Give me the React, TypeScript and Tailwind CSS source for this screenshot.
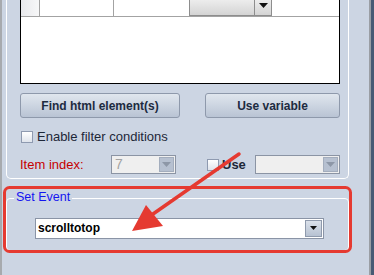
import React from 'react';

const Arrow = ({ light = false }: { light?: boolean }) => (
  <svg width="9" height="5" viewBox="0 0 9 5">
    <path d="M0 0h9L4.5 5z" fill={light ? '#8d97a7' : '#111'} />
  </svg>
);

const Checkbox = () => (
  <div className="w-[12px] h-[12px] border border-[#8e9ab0] bg-gradient-to-b from-white to-[#dfe4ec] shrink-0" />
);

const DisabledCombo = ({ value, width }: { value?: string; width: string }) => (
  <div className={`${width} h-[19px] shrink-0 flex border border-[#8b94a4] bg-[#efefef]`}>
    <div className="flex-1 pl-[3px] text-[14px] leading-[17px] text-[#a2a2a2]">{value}</div>
    <div className="w-[15px] my-[1px] mr-[1px] flex items-center justify-center bg-[#b6c0d0] border border-[#a3adbd]">
      <Arrow light />
    </div>
  </div>
);

const App = () => {
  return (
    <div className="relative w-[374px] h-[275px] overflow-hidden flex bg-[#ccd5e3] font-['Liberation_Sans',Arial,sans-serif]">
      <div className="w-[2px] shrink-0 bg-[#a7aaae]" />

      <div className="flex-1 flex flex-col pl-[4px]">
        {/* upper group (top cut off) */}
        <div className="w-[343px] -mt-[6px] border-x border-b border-white rounded-b-[5px] pl-[13px] pr-[8px] pb-[3px]">
          <div className="w-[320px] h-[90px] bg-white border-x border-b border-black">
            <div className="h-[23px] flex border-b border-[#a3a3a3]">
              <div className="w-[19px] bg-gradient-to-r from-[#e8e9ec] to-[#f7f7f8] border-r border-[#a3a3a3]" />
              <div className="w-[74px] border-r border-[#a3a3a3]" />
              <div className="w-[75px]" />
              <div className="w-[83px] flex border border-[#8d8d8d] bg-gradient-to-b from-[#f5f5f5] to-[#d4d4d4]">
                <div className="flex-1" />
                <div className="w-[17px] border-l border-[#8d8d8d] flex items-center justify-center">
                  <Arrow />
                </div>
              </div>
              <div className="flex-1" />
            </div>
          </div>

          <div className="mt-[9px] flex gap-[25px]">
            <button className="w-[160px] h-[25px] shrink-0 rounded-[3px] border border-[#8e99ab] bg-gradient-to-b from-[#e0e6ee] to-[#b9c4d4] text-[12px] font-bold text-[#1d2b40]">
              Find html element(s)
            </button>
            <button className="w-[135px] h-[25px] shrink-0 rounded-[3px] border border-[#8e99ab] bg-gradient-to-b from-[#e0e6ee] to-[#b9c4d4] text-[12px] font-bold text-[#1d2b40]">
              Use variable
            </button>
          </div>

          <div className="mt-[12px] ml-[1px] h-[13px] flex items-center gap-[4px]">
            <Checkbox />
            <span className="text-[13px] text-[#1d2738]">Enable filter conditions</span>
          </div>

          <div className="mt-[12px] flex items-center">
            <span className="w-[91px] shrink-0 text-[13px] text-[#c60000]">Item index:</span>
            <DisabledCombo value="7" width="w-[65px]" />
            <div className="ml-[31px] w-[48px] shrink-0 flex items-center gap-[3px]">
              <Checkbox />
              <span className="text-[13px] font-bold text-[#1d2738]">Use</span>
            </div>
            <DisabledCombo width="w-[85px]" />
          </div>
        </div>

        {/* Set Event group */}
        <div className="mt-[19px] w-[343px] h-[53px] border border-white rounded-[4px] flex flex-col">
          <span className="-mt-[9px] ml-[7px] px-[2px] w-fit bg-[#ccd5e3] text-[12.5px] leading-[15px] text-[#1414f0]">
            Set Event
          </span>
          <div className="mt-[13px] ml-[28px] w-[289px] h-[21px] flex border border-[#8a94a6] bg-white">
            <div className="flex-1 pl-[2px] text-[12px] font-bold leading-[19px] text-black">scrolltotop</div>
            <div className="w-[17px] m-px flex items-center justify-center border border-[#8f9aac] bg-gradient-to-b from-[#dbe1ea] to-[#b7c2d2]">
              <svg width="7" height="4" viewBox="0 0 7 4">
                <path d="M0 0h7L3.5 4z" fill="#111" />
              </svg>
            </div>
          </div>
        </div>
      </div>

      <div className="w-[2px] shrink-0 bg-[#9a9ea4]" />
      <div className="w-[3px] shrink-0 bg-[#475a74]" />

      {/* annotation overlay */}
      <svg className="absolute inset-0 pointer-events-none" width="374" height="275" viewBox="0 0 374 275">
        <rect x="4.5" y="187.5" width="346" height="64" rx="5" fill="none" stroke="#e53a31" strokeWidth="3" />
        <line x1="239" y1="154" x2="153" y2="214" stroke="#e53a31" strokeWidth="3.5" strokeLinecap="round" />
        <polygon points="132,231 146,205 163,226" fill="#e53a31" />
      </svg>
    </div>
  );
};

export default App;
